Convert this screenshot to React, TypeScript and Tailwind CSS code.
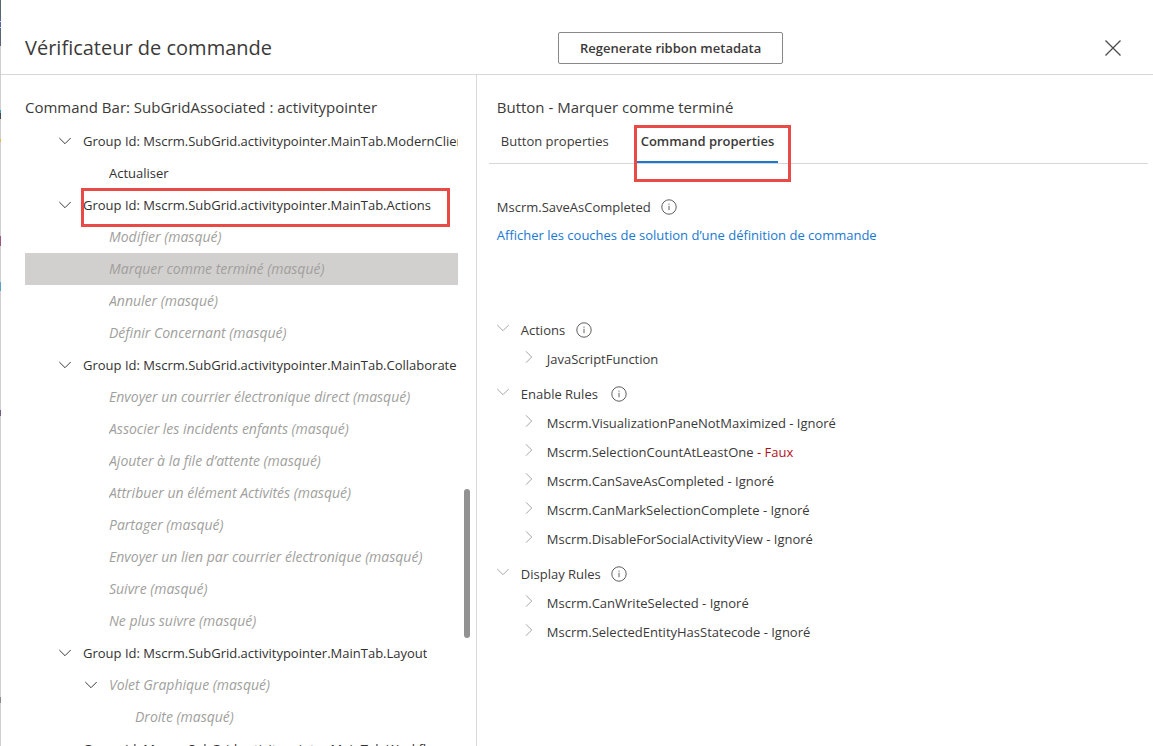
import { useState } from "react";

type TreeItem = {
  label: string;
  level: 1 | 2 | 3;
  expandable?: boolean;
  hidden?: boolean;
  marked?: boolean;
};

const tree: TreeItem[] = [
  { label: "Group Id: Mscrm.SubGrid.activitypointer.MainTab.ModernClient", level: 1, expandable: true },
  { label: "Actualiser", level: 2 },
  { label: "Group Id: Mscrm.SubGrid.activitypointer.MainTab.Actions", level: 1, expandable: true, marked: true },
  { label: "Modifier (masqué)", level: 2, hidden: true },
  { label: "Marquer comme terminé (masqué)", level: 2, hidden: true },
  { label: "Annuler (masqué)", level: 2, hidden: true },
  { label: "Définir Concernant (masqué)", level: 2, hidden: true },
  { label: "Group Id: Mscrm.SubGrid.activitypointer.MainTab.Collaborate", level: 1, expandable: true },
  { label: "Envoyer un courrier électronique direct (masqué)", level: 2, hidden: true },
  { label: "Associer les incidents enfants (masqué)", level: 2, hidden: true },
  { label: "Ajouter à la file d’attente (masqué)", level: 2, hidden: true },
  { label: "Attribuer un élément Activités (masqué)", level: 2, hidden: true },
  { label: "Partager (masqué)", level: 2, hidden: true },
  { label: "Envoyer un lien par courrier électronique (masqué)", level: 2, hidden: true },
  { label: "Suivre (masqué)", level: 2, hidden: true },
  { label: "Ne plus suivre (masqué)", level: 2, hidden: true },
  { label: "Group Id: Mscrm.SubGrid.activitypointer.MainTab.Layout", level: 1, expandable: true },
  { label: "Volet Graphique (masqué)", level: 2, expandable: true, hidden: true },
  { label: "Droite (masqué)", level: 3, hidden: true },
  { label: "Group Id: Mscrm.SubGrid.activitypointer.MainTab.Workflow", level: 1, expandable: true },
];

const indent = { 1: "pl-[34px]", 2: "pl-[60px]", 3: "pl-[86px]" };

const sections = [
  { title: "Actions", width: "min-w-[46px]", rules: [{ name: "JavaScriptFunction", state: "" }] },
  {
    title: "Enable Rules",
    width: "min-w-[81px]",
    rules: [
      { name: "Mscrm.VisualizationPaneNotMaximized", state: "Ignoré" },
      { name: "Mscrm.SelectionCountAtLeastOne", state: "Faux" },
      { name: "Mscrm.CanSaveAsCompleted", state: "Ignoré" },
      { name: "Mscrm.CanMarkSelectionComplete", state: "Ignoré" },
      { name: "Mscrm.DisableForSocialActivityView", state: "Ignoré" },
    ],
  },
  {
    title: "Display Rules",
    width: "min-w-[81px]",
    rules: [
      { name: "Mscrm.CanWriteSelected", state: "Ignoré" },
      { name: "Mscrm.SelectedEntityHasStatecode", state: "Ignoré" },
    ],
  },
];

function ChevronDown({ className }: { className: string }) {
  return (
    <svg viewBox="0 0 12 12" className={`size-3 shrink-0 ${className}`} fill="none" stroke="currentColor" aria-hidden="true">
      <path d="M0.3 3 L6 8.7 L11.7 3" />
    </svg>
  );
}

function ChevronRight() {
  return (
    <svg viewBox="0 0 12 12" className="size-3 shrink-0 text-[#a6a6a6]" fill="none" stroke="currentColor" aria-hidden="true">
      <path d="M3 0.3 L8.7 6 L3 11.7" />
    </svg>
  );
}

function InfoButton({ label }: { label: string }) {
  return (
    <button type="button" aria-label={label} className="shrink-0 text-[#605e5c]">
      <svg viewBox="0 0 16 16" className="size-4" fill="none" stroke="currentColor" aria-hidden="true">
        <circle cx="8" cy="8" r="7.2" />
        <path d="M8 6.8 V11.2" />
        <path d="M8 4.6 V5.7" />
      </svg>
    </button>
  );
}

function Highlight({ className }: { className: string }) {
  return <span aria-hidden="true" className={`pointer-events-none absolute z-10 border-3 border-[#e84a45] ${className}`} />;
}

function PageEdge() {
  return (
    <div aria-hidden="true" className="flex w-px shrink-0 flex-col bg-[#cfcfcf]">
      <div className="h-[21px] bg-[#5a6478]" />
      <div className="h-[7px] border-y border-[#c5c9ea] bg-[#5560a5]" />
      <div className="h-[18px] bg-[#5a6478]" />
      <div className="mt-16 h-[3px] bg-[#3c9ad6]" />
      <div className="h-[6px] bg-[#4a4a4a]" />
      <div className="mt-5 h-[3px] bg-[#e0b458]" />
      <div className="mt-[94px] h-[10px] bg-[#95597f]" />
      <div className="mt-9 h-[9px] bg-[#5ba0cc]" />
      <div className="mt-[119px] h-[6px] bg-[#6f5f86]" />
      <div className="mt-[281px] h-[6px] bg-[#8a8a8a]" />
    </div>
  );
}

export default function App() {
  const [selected, setSelected] = useState(4);
  const [tab, setTab] = useState(1);

  return (
    <div className="flex h-screen overflow-hidden bg-white font-['Open_Sans','Noto_Sans',sans-serif] text-[13px] leading-5 text-[#3b3a39]">
      <PageEdge />
      <div role="dialog" aria-labelledby="dialog-title" className="flex min-w-0 flex-1 flex-col">
        <header className="grid grid-cols-[48.35%_auto_1fr] items-center border-b border-[#d8d8d8] pt-8 pb-[10px]">
          <h1 id="dialog-title" className="pl-6 text-xl leading-8">
            Vérificateur de commande
          </h1>
          <button type="button" className="h-8 rounded-[2px] border border-[#8a8886] px-[21px] font-semibold whitespace-nowrap">
            Regenerate ribbon metadata
          </button>
          <button type="button" aria-label="Fermer" className="mr-8 justify-self-end text-[#4a4a4a]">
            <svg viewBox="0 0 16 16" className="size-4" fill="none" stroke="currentColor" strokeWidth="1.3" aria-hidden="true">
              <path d="M0.5 0.5 L15.5 15.5 M15.5 0.5 L0.5 15.5" />
            </svg>
          </button>
        </header>

        <div className="flex min-h-0 flex-1">
          <section className="relative flex w-[41.3%] shrink-0 flex-col border-r border-[#d8d8d8] pt-[22px] pr-[18px] pl-6">
            <h2 className="shrink-0 pb-2 text-[15px] leading-5 whitespace-nowrap">Command Bar: SubGridAssociated : activitypointer</h2>
            <ul className="min-h-0 flex-1 overflow-hidden">
              {tree.map((item, i) => (
                <li key={item.label} className="relative">
                  <button
                    type="button"
                    onClick={() => setSelected(i)}
                    className={`flex h-8 w-full items-center gap-3 text-left ${indent[item.level]} ${selected === i ? "bg-[#d2d0ce]" : ""}`}
                  >
                    {item.expandable ? <ChevronDown className="text-[#3b3a39]" /> : <span className="w-3 shrink-0" />}
                    <span className={`min-w-0 overflow-hidden pb-px whitespace-nowrap ${item.hidden ? "pr-1 text-sm text-[#a19f9d] italic" : "text-[#323130]"}`}>
                      {item.label}
                    </span>
                  </button>
                  {item.marked && <Highlight className="-top-px right-2 -bottom-[6px] left-14" />}
                </li>
              ))}
            </ul>
            <div aria-hidden="true" className="absolute top-[414px] right-[6px] h-[149px] w-[6px] rounded-full bg-[#929292]" />
          </section>

          <section className="min-w-0 flex-1 pt-[22px] pr-[5px] pl-3">
            <h2 className="pb-2 pl-2 text-[15px] leading-5">Button - Marquer comme terminé</h2>
            <div role="tablist" className="flex h-[39px] gap-6 border-b border-[#d8d8d8] pl-2">
              {["Button properties", "Command properties"].map((name, i) => (
                <div key={name} className="relative flex">
                  <button
                    type="button"
                    role="tab"
                    aria-selected={tab === i}
                    onClick={() => setTab(i)}
                    className={`border-b-2 px-1 pb-1 whitespace-nowrap ${tab === i ? "border-[#1a78d2] font-semibold" : "border-transparent"}`}
                  >
                    {name}
                  </button>
                  {i === 1 && <Highlight className="top-0 -right-[13px] -bottom-[19px] -left-[3px]" />}
                </div>
              ))}
            </div>

            <div className="pt-8 pl-2">
              <div className="flex h-[22px] items-center gap-[10px]">
                <span>Mscrm.SaveAsCompleted</span>
                <InfoButton label="Informations sur la commande" />
              </div>
              <a href="#couches" className="mt-[7px] inline-block text-[#1a78d2]">
                Afficher les couches de solution d’une définition de commande
              </a>

              <div className="mt-[70px] flex flex-col gap-[6px]">
                {sections.map((section) => (
                  <div key={section.title}>
                    <div className="flex h-[29px] items-center gap-[9px]">
                      <button type="button" className="flex items-center gap-3">
                        <ChevronDown className="mb-1 text-[#a6a6a6]" />
                        <span className={`text-left ${section.width}`}>{section.title}</span>
                      </button>
                      <InfoButton label={`Informations : ${section.title}`} />
                    </div>
                    <ul>
                      {section.rules.map((rule) => (
                        <li key={rule.name}>
                          <button type="button" className="flex h-[29px] items-center gap-3 pl-[26px] [&>svg]:mb-1">
                            <ChevronRight />
                            <span>
                              {rule.name}
                              {rule.state && (
                                <span className={rule.state === "Faux" ? "text-[#b1101c]" : ""}> - {rule.state}</span>
                              )}
                            </span>
                          </button>
                        </li>
                      ))}
                    </ul>
                  </div>
                ))}
              </div>
            </div>
          </section>
        </div>
      </div>
    </div>
  );
}
